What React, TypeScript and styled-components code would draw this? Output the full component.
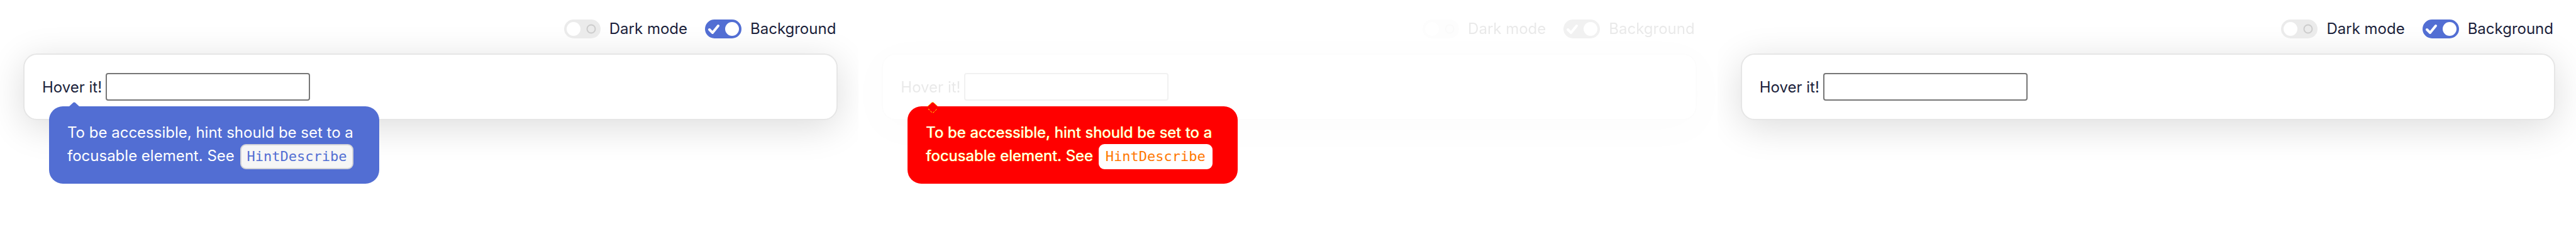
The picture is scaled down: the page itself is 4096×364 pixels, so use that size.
import React, { useId } from "react";
import styled, { createGlobalStyle, css } from "styled-components";

const GlobalStyle = createGlobalStyle`
  *, *::before, *::after { box-sizing: border-box; }
  body {
    margin: 0;
    background: #fff;
    color: #1b1f3b;
    font: 24px/36px Inter, "Liberation Sans", sans-serif;
  }
`;

const Page = styled.main`
  display: grid;
  grid-template-columns: repeat(3, minmax(0, 1fr));
  min-height: 100vh;
`;

const Pane = styled.section`
  position: relative;
  overflow: hidden;
`;

const Content = styled.div<{ $faded: boolean }>`
  height: 100%;
  padding: 24px 33px 24px 37px;
  ${(p) => p.$faded && css`filter: grayscale(1) opacity(0.1);`}
`;

const Toolbar = styled.div`
  position: relative;
  z-index: 1;
  display: flex;
  justify-content: flex-end;
  gap: 28px;
  height: 44px;
  padding-right: 3px;
`;

const ToggleLabel = styled.label`
  display: flex;
  align-items: center;
  gap: 14px;
  height: 44px;
`;

const Switch = styled.span<{ $on: boolean }>`
  display: flex;
  align-items: center;
  justify-content: space-between;
  flex-direction: ${(p) => (p.$on ? "row-reverse" : "row")};
  width: 58px;
  height: 30px;
  padding: 0 4px;
  border-radius: 15px;
  background: ${(p) => (p.$on ? "#526ed3" : "#ebebeb")};
`;

const HiddenInput = styled.input`
  position: absolute;
  width: 1px;
  height: 1px;
  margin: 0;
  opacity: 0;
`;

const Knob = styled.span`
  width: 22px;
  height: 22px;
  border-radius: 50%;
  background: #fff;
`;

const Glyph = styled.svg`
  width: 22px;
  height: 22px;
  fill: none;
`;

const Card = styled.div`
  display: flex;
  align-items: center;
  gap: 6px;
  margin-top: 17px;
  padding: 29px 28px;
  border: 2px solid #e6e6e6;
  border-radius: 22px;
  background: #fff;
  box-shadow: 0 11px 58px rgba(0, 0, 0, 0.14);
`;

const FieldLabel = styled.label`
  padding-top: 2px;
`;

const Field = styled.input`
  width: 325px;
  height: 44px;
  padding: 0 8px;
  border: 2px solid #767676;
  border-radius: 4px;
  background: #fff;
  font: inherit;
`;

const Hint = styled.div<{ $diff: boolean }>`
  position: absolute;
  top: 169px;
  left: 78px;
  width: 525px;
  padding: 23px 28px 26px 29px;
  border-radius: 22px;
  background: ${(p) => (p.$diff ? "#f00" : "#526ed3")};
  color: #fff;
  line-height: 37px;
  text-shadow: ${(p) => (p.$diff ? "0 0 1px #ff0, 0 0 1px #ff0" : "none")};
`;

const Arrow = styled.svg`
  position: absolute;
  top: -7px;
  left: 31px;
  width: 18px;
  height: 18px;
  overflow: visible;
`;

const Code = styled.code<{ $diff: boolean }>`
  display: inline-block;
  height: 40px;
  margin: -4px 0 -4px 2px;
  padding: 0 9px;
  border: 2px solid ${(p) => (p.$diff ? "#fff" : "#d3d4d8")};
  border-radius: 9px;
  background: ${(p) => (p.$diff ? "#fff" : "#f6f6f6")};
  color: ${(p) => (p.$diff ? "#f70" : "#526ed3")};
  font: 22px/36px "DejaVu Sans Mono", monospace;
  text-shadow: none;
  vertical-align: middle;
`;

function Toggle({ label, on }: { label: string; on: boolean }) {
  return (
    <ToggleLabel>
      <HiddenInput type="checkbox" defaultChecked={on} />
      <Switch $on={on}>
        <Knob />
        <Glyph viewBox="0 0 22 22" aria-hidden="true">
          {on ? (
            <path d="M3 12l5 5L17 6" stroke="#fff" strokeWidth="4" strokeLinecap="round" strokeLinejoin="round" />
          ) : (
            <circle cx="11" cy="11" r="6.5" stroke="#ccc" strokeWidth="2" />
          )}
        </Glyph>
      </Switch>
      {label}
    </ToggleLabel>
  );
}

function Example({ hint, diff = false }: { hint: boolean; diff?: boolean }) {
  const id = useId();
  return (
    <Pane>
      <Content $faded={diff}>
        <Toolbar>
          <Toggle label="Dark mode" on={false} />
          <Toggle label="Background" on />
        </Toolbar>
        <Card>
          <FieldLabel htmlFor={id}>Hover it!</FieldLabel>
          <Field id={id} type="text" />
        </Card>
      </Content>
      {hint && (
        <Hint role="tooltip" $diff={diff}>
          <Arrow viewBox="0 0 18 18" aria-hidden="true">
            <path d="M0 8L7.500 1Q9 0 10.500 1L18 8L9 17Z" fill={diff ? "#f00" : "#526ed3"} />
            {diff && (
              <path
                d="M1 7L7.500 1Q9 0 10.500 1L17 7M2 11L8 17H10L16 11"
                fill="none"
                stroke="#ff0"
                strokeDasharray="3 2"
              />
            )}
          </Arrow>
          To be accessible, hint should be set to a<br />
          focusable element. See <Code $diff={diff}>HintDescribe</Code>
        </Hint>
      )}
    </Pane>
  );
}

export default function App() {
  return (
    <>
      <GlobalStyle />
      <Page>
        <Example hint />
        <Example hint diff />
        <Example hint={false} />
      </Page>
    </>
  );
}
